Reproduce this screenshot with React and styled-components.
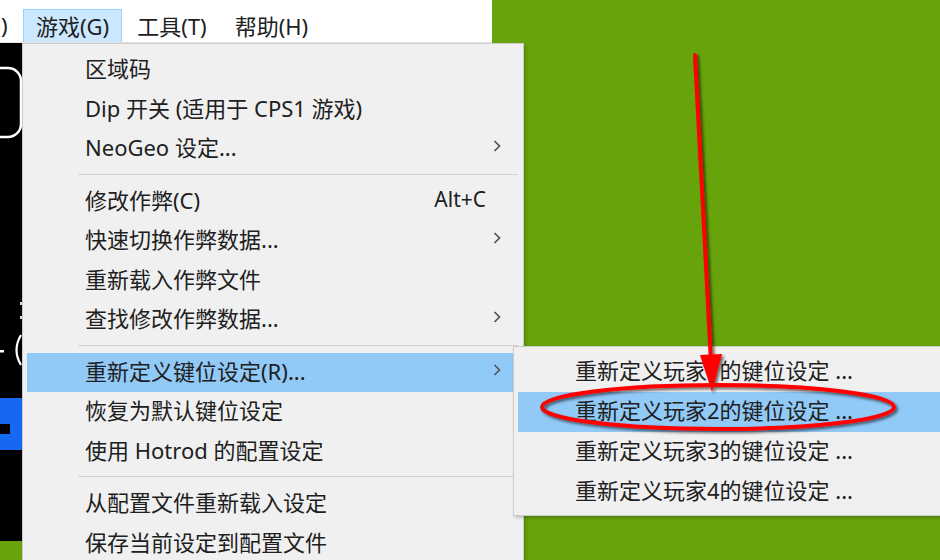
import React from 'react';
import styled, { createGlobalStyle } from 'styled-components';

const GlobalStyle = createGlobalStyle`
  html, body {
    margin: 0;
    padding: 0;
    background: #67a30b;
  }
`;

const barItems = [
  { label: '游戏(G)', open: true },
  { label: '工具(T)' },
  { label: '帮助(H)' }
];

const menuGroups = [
  [
    { label: '区域码' },
    { label: 'Dip 开关 (适用于 CPS1 游戏)' },
    { label: 'NeoGeo 设定...', sub: true }
  ],
  [
    { label: '修改作弊(C)', shortcut: 'Alt+C' },
    { label: '快速切换作弊数据...', sub: true },
    { label: '重新载入作弊文件' },
    { label: '查找修改作弊数据...', sub: true }
  ],
  [
    { label: '重新定义键位设定(R)...', sub: true, active: true },
    { label: '恢复为默认键位设定' },
    { label: '使用 Hotrod 的配置设定' }
  ],
  [
    { label: '从配置文件重新载入设定' },
    { label: '保存当前设定到配置文件' }
  ]
];

const playerItems = [1, 2, 3, 4];

const Chevron = () => (
  <svg width="8" height="14" viewBox="0 0 8 14">
    <path d="M1.5 2 L6.5 7 L1.5 12" fill="none" stroke="#555" strokeWidth="1.7" />
  </svg>
);

// the white/blue bits of the game screen peeking out left of the menu
const GameArt = () => (
  <svg width="40" height="498" viewBox="0 0 40 498">
    <path d="M0 25 H8 A13 13 0 0 1 21 38 V81 A13 13 0 0 1 8 94 H0" fill="none" stroke="#fff" strokeWidth="2.5" />
    <rect x="20" y="259" width="2" height="3" fill="#ddd" />
    <rect x="20" y="273" width="2" height="3" fill="#ddd" />
    <rect x="0" y="307" width="4" height="2.5" fill="#fff" />
    <path d="M21 292 Q12 307 21 322" fill="none" stroke="#fff" strokeWidth="2.2" />
    <path d="M0 355 H22 V407 H0 V391 H10 V381 H0 Z" fill="#1668f2" />
  </svg>
);

const Annotation = () => (
  <Overlay width="940" height="560" viewBox="0 0 940 560">
    <defs>
      <filter id="shade" x="-10%" y="-10%" width="130%" height="130%">
        <feDropShadow dx="2" dy="2" stdDeviation="1.6" floodColor="#000" floodOpacity="0.6" />
      </filter>
    </defs>
    <g filter="url(#shade)">
      <ellipse cx="718" cy="407" rx="176" ry="22" fill="none" stroke="#f00" strokeWidth="4" />
      <path d="M695 55 L711 362" stroke="#f00" strokeWidth="4" strokeLinecap="round" fill="none" />
      <path d="M700 355 L722 354 L712 392 Z" fill="#f00" />
    </g>
  </Overlay>
);

export default function App() {
  return (
    <Screen>
      <GlobalStyle />
      <AppWindow>
        <MenuBar>
          <ClippedItem>)</ClippedItem>
          {barItems.map((item) => (
            <BarItem key={item.label} $open={item.open}>{item.label}</BarItem>
          ))}
        </MenuBar>
        <GameView>
          <GameArt />
        </GameView>
      </AppWindow>

      <Dropdown>
        {menuGroups.map((group, gi) => (
          <React.Fragment key={gi}>
            {gi > 0 && <Separator />}
            {group.map((item) => (
              <MenuItem key={item.label} $active={item.active}>
                <Label>{item.label}</Label>
                {item.shortcut && <Shortcut>{item.shortcut}</Shortcut>}
                <ArrowCell>{item.sub && <Chevron />}</ArrowCell>
                {item.active && (
                  <SubMenu>
                    {playerItems.map((n) => (
                      <SubItem key={n} $active={n === 2}>
                        重新定义玩家{n}的键位设定 ...
                      </SubItem>
                    ))}
                  </SubMenu>
                )}
              </MenuItem>
            ))}
          </React.Fragment>
        ))}
      </Dropdown>

      <Annotation />
    </Screen>
  );
}

const Screen = styled.div`
  position: relative;
  width: 940px;
  height: 560px;
  overflow: hidden;
  display: flex;
  background: #67a30b;
  font-family: "Noto Sans", "Noto Sans CJK SC", sans-serif;
  font-size: 22px;
  color: #202020;
`;

const AppWindow = styled.div`
  width: 492px;
  display: flex;
  flex-direction: column;
`;

const MenuBar = styled.div`
  height: 43px;
  background: #fff;
  display: flex;
  align-items: flex-end;
  border-bottom: 1px solid #e6e6e6;
  box-sizing: border-box;
`;

const ClippedItem = styled.div`
  width: 23px;
  height: 33px;
  padding: 0 0 2px 1px;
  box-sizing: border-box;
  display: flex;
  align-items: center;
`;

const BarItem = styled.div`
  height: 33px;
  padding: 0 12px 2px;
  margin-right: 2px;
  box-sizing: border-box;
  display: flex;
  align-items: center;
  white-space: nowrap;
  border: 1px solid ${(p) => (p.$open ? '#99d1ff' : 'transparent')};
  border-bottom: none;
  background: ${(p) => (p.$open ? '#cce8ff' : 'transparent')};
`;

const GameView = styled.div`
  height: 498px;
  background: #000;
  overflow: hidden;
`;

const Dropdown = styled.div`
  position: absolute;
  left: 22px;
  top: 43px;
  width: 502px;
  box-sizing: border-box;
  padding: 6px 3px 6px 4px;
  background: #f0f0f0;
  border: 1px solid #cbcbcb;
  box-shadow: 2px 2px 3px rgba(0, 0, 0, 0.18);
`;

const MenuItem = styled.div`
  position: relative;
  height: 39.5px;
  box-sizing: border-box;
  display: flex;
  align-items: center;
  padding: 0 0 5px 58px;
  white-space: nowrap;
  background: ${(p) => (p.$active ? '#91c9f7' : 'transparent')};
`;

const Label = styled.span`
  flex: 1;
`;

const Shortcut = styled.span`
  font-size: 21px;
`;

const ArrowCell = styled.span`
  width: 34px;
  display: flex;
  align-items: center;
  padding-left: 7px;
  box-sizing: border-box;
`;

const Separator = styled.div`
  height: 13px;
  display: flex;
  align-items: center;
  margin: -1px 2px 1px 51px;

  &::after {
    content: '';
    flex: 1;
    height: 1px;
    background: #d3d3d3;
  }
`;

const SubMenu = styled.div`
  position: absolute;
  left: 486px;
  top: -7px;
  width: 460px;
  box-sizing: border-box;
  padding: 5px 0 3px 4px;
  background: #f0f0f0;
  border: 1px solid #cbcbcb;
  box-shadow: 2px 2px 3px rgba(0, 0, 0, 0.2);
  z-index: 2;
`;

const SubItem = styled.div`
  height: 40px;
  box-sizing: border-box;
  display: flex;
  align-items: center;
  padding: 0 0 5px 57px;
  background: ${(p) => (p.$active ? '#91c9f7' : 'transparent')};
`;

const Overlay = styled.svg`
  position: absolute;
  left: 0;
  top: 0;
  pointer-events: none;
  z-index: 5;
`;
